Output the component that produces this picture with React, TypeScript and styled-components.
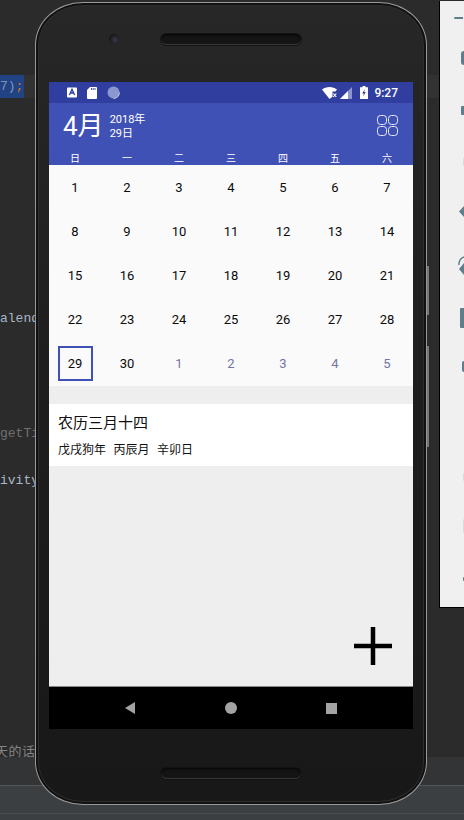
import React from 'react';
import styled, { createGlobalStyle } from 'styled-components';

const Global = createGlobalStyle`
  html, body { margin: 0; padding: 0; background: #2b2b2b; }
  body { font-family: Roboto, "Noto Sans CJK SC", sans-serif; }
`;

const Desktop = styled.div`
  position: relative;
  width: 464px;
  height: 820px;
  overflow: hidden;
  display: flex;
  flex-direction: column;
  background: #2b2b2b;
`;

const IdeMain = styled.div`
  height: 740px;
  display: flex;
  align-items: flex-start;
`;

const Editor = styled.div`
  width: 439px;
  padding-top: 75px;
  display: flex;
  flex-direction: column;
  font-family: "Liberation Mono", monospace;
  font-size: 13px;
  line-height: 23px;
  white-space: nowrap;
`;

const CodeLine = styled.div<{ $top: number; $color?: string; $current?: boolean }>`
  margin-top: ${({ $top }) => $top}px;
  height: 23px;
  color: ${({ $color }) => $color ?? '#8f9296'};
  background: ${({ $current }) => ($current ? '#323232' : 'transparent')};
`;

const Selection = styled.div`
  width: 24px;
  height: 23px;
  overflow: hidden;
  background: #214283;
  color: #7f93b8;
`;

const Orange = styled.span`
  color: #cc7832;
`;

const SidePanel = styled.div`
  width: 25px;
  height: 607px;
  margin-top: 1px;
  box-sizing: border-box;
  background: #f0f0f0;
  border: solid #000;
  border-width: 0 0 1px 1px;
  display: flex;
  flex-direction: column;
  align-items: flex-end;
`;

const ToolStub = styled.div<{ $top: number; $w: number; $h: number; $shape?: 'half' | 'diamond'; $faint?: boolean }>`
  width: ${({ $w }) => $w}px;
  height: ${({ $h }) => $h}px;
  margin-top: ${({ $top }) => $top}px;
  flex: none;
  background: ${({ $faint }) => ($faint ? '#d9dbdc' : '#607d8b')};
  border-radius: ${({ $shape }) => ($shape === 'half' ? '8px 0 0 8px' : '1px 0 0 1px')};
  clip-path: ${({ $shape }) => ($shape === 'diamond' ? 'polygon(100% 0, 0 50%, 100% 100%)' : 'none')};
`;

const ToolDash = styled(ToolStub)`
  margin-right: 1px;
`;

const ToolArc = styled.svg`
  flex: none;
  margin-top: 39px;
`;

const CutText = styled.div`
  height: 17px;
  overflow: hidden;
  color: #858585;
  font-size: 13px;
  line-height: 24px;
  letter-spacing: 0.5px;
  text-indent: -5px;
  white-space: nowrap;
`;

const IdeStatus = styled.div`
  height: 28px;
  background: #323436;
`;

const IdeBar = styled.div`
  height: 27px;
  background: #3c3f41;
  border-top: 1px solid #555;
`;

const IdeBarBottom = styled.div`
  flex: 1;
  background: #3c3f41;
  border-top: 1px solid #4a4d4f;
`;

const Phone = styled.div`
  position: absolute;
  left: 35px;
  top: 2px;
  width: 392px;
  height: 803px;
  box-sizing: border-box;
  border-radius: 48px / 43px;
  border: 1px solid #999;
  background: linear-gradient(180deg, #272727 0%, #1e1e1e 45%, #181818 100%);
  box-shadow: inset 0 0 0 2px #111, inset 0 0 0 3px #2e2e2e;
  display: flex;
  flex-direction: column;
  align-items: center;
`;

const Camera = styled.div`
  position: absolute;
  left: 73px;
  top: 31px;
  width: 10px;
  height: 10px;
  border-radius: 50%;
  background: radial-gradient(circle at 60% 60%, #3c3550, #161616 70%);
`;

const Speaker = styled.div<{ $bottom?: boolean }>`
  width: 140px;
  height: 11px;
  flex: none;
  margin-top: ${({ $bottom }) => ($bottom ? 39 : 31)}px;
  border-radius: 6px;
  background: #141414;
  box-shadow: inset 0 -1px 1px #3a3a3a, inset 0 1px 2px #050505, 0 0 0 1px #121212;
`;

const SideButton = styled.div<{ $top: number; $h: number }>`
  position: absolute;
  right: -3px;
  top: ${({ $top }) => $top}px;
  width: 2px;
  height: ${({ $h }) => $h}px;
  background: #777;
`;

const Screen = styled.div`
  width: 364px;
  height: 647px;
  margin-top: 37px;
  flex: none;
  display: flex;
  flex-direction: column;
  background: #eee;
`;

const StatusBar = styled.div`
  height: 21px;
  flex: none;
  background: #303f9f;
  display: flex;
  align-items: center;
  justify-content: space-between;
  padding: 0 15px 0 18px;
  color: #fff;
`;

const StatusGroup = styled.div<{ $gap: number }>`
  display: flex;
  align-items: center;
  gap: ${({ $gap }) => $gap}px;
`;

const Clock = styled.span`
  font-size: 12px;
  font-weight: 500;
  margin-left: -2px;
`;

const AppHeader = styled.div`
  height: 62px;
  flex: none;
  background: #3f51b5;
  color: #fff;
  display: flex;
  flex-direction: column;
`;

const HeaderTop = styled.div`
  height: 45px;
  display: flex;
  align-items: center;
  padding: 0 15px 0 14px;
`;

const MonthTitle = styled.div`
  font-size: 26px;
  line-height: 30px;
  margin-right: 6px;
`;

const YearDay = styled.div`
  font-size: 11px;
  line-height: 14px;
  padding-top: 2px;
  flex: 1;
`;

const WeekRow = styled.div`
  display: grid;
  grid-template-columns: repeat(7, 52px);
  font-size: 10px;
  line-height: 13px;
  text-align: center;
  padding-top: 4px;
`;

const Month = styled.div`
  height: 221px;
  flex: none;
  background: #fafafa;
  display: grid;
  grid-template-columns: repeat(7, 52px);
  grid-auto-rows: 44px;
`;

const Day = styled.div<{ $muted?: boolean }>`
  display: flex;
  align-items: center;
  justify-content: center;
  font-size: 13px;
  color: ${({ $muted }) => ($muted ? '#7474a4' : '#0a0a0a')};
`;

const SelectedDay = styled.span`
  width: 35px;
  height: 35px;
  box-sizing: border-box;
  border: 2px solid #3f51b5;
  display: flex;
  align-items: center;
  justify-content: center;
`;

const LunarCard = styled.div`
  height: 62px;
  flex: none;
  margin-top: 18px;
  background: #fff;
  padding: 0 9px;
  box-sizing: border-box;
  color: #111;
`;

const LunarTitle = styled.div`
  font-size: 15px;
  line-height: 20px;
  padding-top: 9px;
`;

const LunarSub = styled.div`
  display: flex;
  gap: 7.5px;
  font-size: 12px;
  line-height: 16px;
  padding-top: 9px;
`;

const Content = styled.div`
  flex: 1;
  display: flex;
  align-items: flex-end;
  justify-content: flex-end;
  padding: 0 21px 21px 0;
  border-bottom: 1px solid #888;
`;

const NavBar = styled.div`
  height: 42px;
  flex: none;
  background: #000;
  display: grid;
  grid-template-columns: 100px 101px 11px;
  align-items: center;
  padding-left: 76px;
  box-sizing: border-box;
`;

const NavSquare = styled.div`
  width: 11px;
  height: 11px;
  background: #a3a3a3;
`;

const NavCircle = styled.div`
  width: 12px;
  height: 12px;
  border-radius: 50%;
  background: #a3a3a3;
`;

const NavBack = styled.div`
  width: 0;
  height: 0;
  border-style: solid;
  border-width: 6px 10px 6px 0;
  border-color: transparent #a3a3a3 transparent transparent;
`;

const WEEK = ['日', '一', '二', '三', '四', '五', '六'];
const DAYS = [
  1, 2, 3, 4, 5, 6, 7, 8, 9, 10, 11, 12, 13, 14, 15, 16, 17, 18, 19, 20, 21, 22, 23, 24, 25, 26, 27, 28,
];

const AppIcon = () => (
  <svg width="10" height="11" viewBox="0 0 10 11">
    <rect x="0" y="0.5" width="10" height="10" rx="1" fill="#fff" />
    <path d="M2.4 8 5 2.4 7.6 8M3.4 6h3.2" stroke="#303f9f" strokeWidth="1.3" fill="none" />
  </svg>
);

const SdIcon = () => (
  <svg width="10" height="12" viewBox="0 0 10 12">
    <path d="M3 0h6a1 1 0 0 1 1 1v10a1 1 0 0 1-1 1H1a1 1 0 0 1-1-1V3z" fill="#fff" />
    <path d="M4.500 1v2M6.200 1v2M8 1v2" stroke="#303f9f" strokeWidth="0.9" />
  </svg>
);

const DotIcon = () => (
  <svg width="13" height="13" viewBox="0 0 13 13">
    <circle cx="6.500" cy="6.500" r="6" fill="#8c96cf" />
    <path d="M6.500 12.500a6 6 0 0 0 6-6" stroke="#d8dcf0" strokeWidth="0.8" fill="none" />
  </svg>
);

const WifiIcon = () => (
  <svg width="15" height="12" viewBox="0 0 15 12">
    <path d="M0 2.600C4-.8 11-.8 15 2.600l-1.600 2H10.500V9.800L7.500 12z" fill="#fff" />
    <path d="M11.300 6.500l3 3.500m0-3.500l-3 3.500" stroke="#fff" strokeWidth="1.100" />
  </svg>
);

const SignalIcon = () => (
  <svg width="12" height="12" viewBox="0 0 12 12">
    <path d="M12 0v12H0z" fill="#8c96cf" />
    <path d="M8 4v8H0z" fill="#fff" />
  </svg>
);

const BatteryIcon = () => (
  <svg width="8" height="13" viewBox="0 0 8 13">
    <path d="M2.500 0h3v1.200H8V13H0V1.200h2.500z" fill="#fff" />
    <path d="M4.700 3 2.300 7.400h1.500L3.300 10.500l2.400-4.400H4.200z" fill="#303f9f" />
  </svg>
);

const GridIcon = () => (
  <svg width="21" height="21" viewBox="0 0 21 21" fill="none" stroke="#e8eaf6" strokeWidth="1">
    <rect x="0.500" y="0.500" width="9" height="9" rx="3" />
    <rect x="11.500" y="0.500" width="9" height="9" rx="3" />
    <rect x="0.500" y="11.500" width="9" height="9" rx="3" />
    <rect x="11.500" y="11.500" width="9" height="9" rx="3" />
  </svg>
);

const PlusIcon = () => (
  <svg width="38" height="38" viewBox="0 0 38 38">
    <path d="M19 0v38M0 19h38" stroke="#000" strokeWidth="4.500" />
  </svg>
);

const ToolWifiIcon = () => (
  <ToolArc width="6" height="20" viewBox="0 0 6 20">
    <path d="M6 1C3 2 1 5 .8 9" stroke="#607d8b" strokeWidth="1.400" fill="none" />
    <path d="M6 7 1 13l5 6z" fill="#607d8b" />
  </ToolArc>
);

export default function App() {
  return (
    <Desktop>
      <Global />
      <IdeMain>
        <Editor>
          <CodeLine $top={0} $current>
            <Selection>
              7)<Orange>;</Orange>
            </Selection>
          </CodeLine>
          <CodeLine $top={209} $color="#a9b7c6">alend</CodeLine>
          <CodeLine $top={92} $color="#6f7173">getTi</CodeLine>
          <CodeLine $top={24} $color="#a9b7c6">ivity</CodeLine>
        </Editor>
        <SidePanel>
          <ToolDash $top={16} $w={9} $h={2} />
          <ToolStub $top={32} $w={3} $h={14} $shape="half" />
          <ToolStub $top={41} $w={3} $h={9} />
          <ToolStub $top={43} $w={1} $h={8} $faint />
          <ToolStub $top={40} $w={5} $h={11} $shape="diamond" />
          <ToolWifiIcon />
          <ToolStub $top={32} $w={4} $h={20} />
          <ToolStub $top={33} $w={2} $h={11} $shape="half" />
          <ToolStub $top={101} $w={1} $h={8} $faint />
          <ToolStub $top={38} $w={1} $h={14} $faint />
          <ToolStub $top={44} $w={1} $h={4} />
        </SidePanel>
      </IdeMain>
      <CutText>天的话</CutText>
      <IdeStatus />
      <IdeBar />
      <IdeBarBottom />
      <Phone>
        <Camera />
        <SideButton $top={263} $h={49} />
        <SideButton $top={343} $h={101} />
        <Speaker />
        <Screen>
          <StatusBar>
            <StatusGroup $gap={10}>
              <AppIcon />
              <SdIcon />
              <DotIcon />
            </StatusGroup>
            <StatusGroup $gap={8}>
              <StatusGroup $gap={3}>
                <WifiIcon />
                <SignalIcon />
              </StatusGroup>
              <BatteryIcon />
              <Clock>9:27</Clock>
            </StatusGroup>
          </StatusBar>
          <AppHeader>
            <HeaderTop>
              <MonthTitle>4月</MonthTitle>
              <YearDay>
                <div>2018年</div>
                <div>29日</div>
              </YearDay>
              <GridIcon />
            </HeaderTop>
            <WeekRow>
              {WEEK.map((w) => (
                <div key={w}>{w}</div>
              ))}
            </WeekRow>
          </AppHeader>
          <Month>
            {DAYS.map((d) => (
              <Day key={d}>{d}</Day>
            ))}
            <Day>
              <SelectedDay>29</SelectedDay>
            </Day>
            <Day>30</Day>
            {[1, 2, 3, 4, 5].map((d) => (
              <Day key={`next-${d}`} $muted>
                {d}
              </Day>
            ))}
          </Month>
          <LunarCard>
            <LunarTitle>农历三月十四</LunarTitle>
            <LunarSub>
              <span>戊戌狗年</span>
              <span>丙辰月</span>
              <span>辛卯日</span>
            </LunarSub>
          </LunarCard>
          <Content>
            <PlusIcon />
          </Content>
          <NavBar>
            <NavBack />
            <NavCircle />
            <NavSquare />
          </NavBar>
        </Screen>
        <Speaker $bottom />
      </Phone>
    </Desktop>
  );
}
